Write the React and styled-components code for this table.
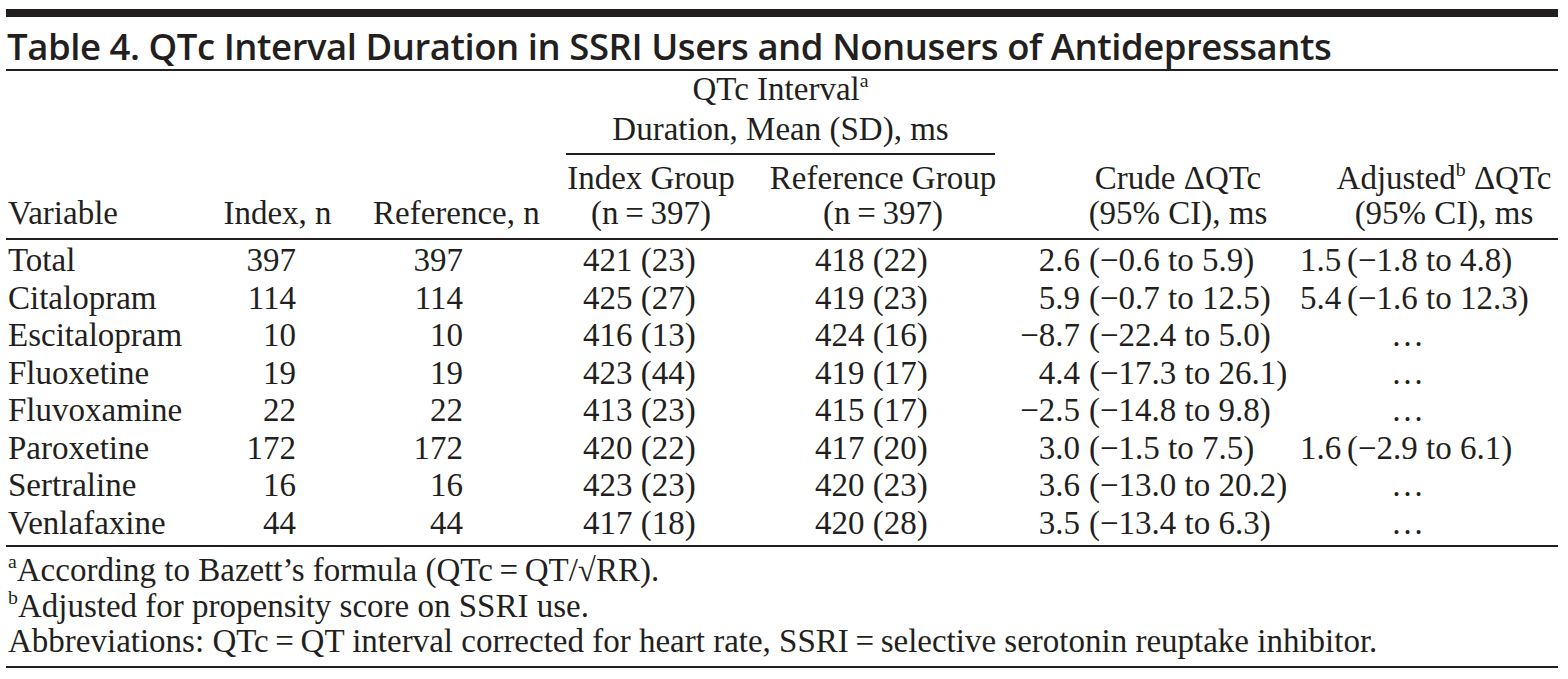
import styled, { createGlobalStyle } from "styled-components";

const GlobalStyle = createGlobalStyle`
  html, body {
    margin: 0;
    padding: 0;
    background: #ffffff;
  }
`;

const INK = "#231f20";
const COLS = "194px 155px 171px 240px 234px 300px 258px";

const Page = styled.div`
  width: 1552px;
  margin-left: 6px;
  padding-top: 9px;
  color: ${INK};
  font-family: "Liberation Serif", "Times New Roman", serif;
`;

const TopRule = styled.div`
  height: 8px;
  background: ${INK};
`;

const Title = styled.h1`
  margin: 0;
  padding: 7px 0 0 1px;
  height: 45px;
  font-family: "Open Sans", "Noto Sans", sans-serif;
  font-weight: 600;
  font-size: 36.5px;
  line-height: 44px;
  letter-spacing: -0.45px;
  white-space: nowrap;
  border-bottom: 2px solid ${INK};
`;

const Head = styled.div`
  display: grid;
  grid-template-columns: ${COLS};
  grid-template-rows: 84px 83px;
  border-bottom: 2px solid ${INK};
  font-size: 33px;
  line-height: 35px;
`;

const HeadCell = styled.div`
  grid-column: ${(p) => p.$col};
  grid-row: ${(p) => p.$row || "1 / 3"};
  align-self: end;
  padding-bottom: 7px;
  padding-left: ${(p) => p.$shift || 0}px;
  text-align: ${(p) => p.$align || "center"};
  white-space: nowrap;
`;

const SpanHead = styled.div`
  grid-column: 4 / 6;
  grid-row: 1;
  align-self: end;
  margin: 0 5px 0 40px;
  padding-bottom: 6px;
  text-align: center;
  white-space: nowrap;
  border-bottom: 2px solid ${INK};
`;

const SpanLine = styled.div`
  margin-bottom: ${(p) => p.$gap || 0}px;
`;

const Sup = styled.sup`
  font-size: 0.6em;
  line-height: 0;
  vertical-align: 0.65em;
`;

const Body = styled.div`
  display: grid;
  grid-template-columns: ${COLS};
  grid-auto-rows: 37.5px;
  padding-top: 2px;
  padding-bottom: 3px;
  border-bottom: 2px solid ${INK};
  font-size: 33px;
  line-height: 37.5px;
`;

const Cell = styled.div`
  white-space: nowrap;
  text-align: ${(p) => p.$align || "left"};
  padding-left: ${(p) => p.$pl || 0}px;
  padding-right: ${(p) => p.$pr || 0}px;
`;

const Interval = styled.div`
  display: flex;
  gap: ${(p) => p.$gap}px;
  white-space: nowrap;
`;

const Estimate = styled.span`
  width: ${(p) => p.$w}px;
  text-align: right;
  flex: none;
`;

const Notes = styled.div`
  padding: 6px 0 6px 2px;
  border-bottom: 2px solid ${INK};
  font-size: 33px;
  line-height: 35.5px;
  white-space: nowrap;
`;

const Note = styled.div``;

const rows = [
  ["Total", "397", "397", "421 (23)", "418 (22)", ["2.6", "(−0.6 to 5.9)"], ["1.5", "(−1.8 to 4.8)"]],
  ["Citalopram", "114", "114", "425 (27)", "419 (23)", ["5.9", "(−0.7 to 12.5)"], ["5.4", "(−1.6 to 12.3)"]],
  ["Escitalopram", "10", "10", "416 (13)", "424 (16)", ["−8.7", "(−22.4 to 5.0)"], null],
  ["Fluoxetine", "19", "19", "423 (44)", "419 (17)", ["4.4", "(−17.3 to 26.1)"], null],
  ["Fluvoxamine", "22", "22", "413 (23)", "415 (17)", ["−2.5", "(−14.8 to 9.8)"], null],
  ["Paroxetine", "172", "172", "420 (22)", "417 (20)", ["3.0", "(−1.5 to 7.5)"], ["1.6", "(−2.9 to 6.1)"]],
  ["Sertraline", "16", "16", "423 (23)", "420 (23)", ["3.6", "(−13.0 to 20.2)"], null],
  ["Venlafaxine", "44", "44", "417 (18)", "420 (28)", ["3.5", "(−13.4 to 6.3)"], null],
];

const T = "\u2009";

export default function App() {
  return (
    <Page>
      <GlobalStyle />
      <TopRule />
      <Title>Table 4. QTc Interval Duration in SSRI Users and Nonusers of Antidepressants</Title>

      <Head>
        <HeadCell $col={1} $align="left" $shift={2}>Variable</HeadCell>
        <HeadCell $col={2}>Index, n</HeadCell>
        <HeadCell $col={3} $shift={18}>Reference, n</HeadCell>
        <SpanHead>
          <SpanLine $gap={5}>
            QTc Interval<Sup>a</Sup>
          </SpanLine>
          <SpanLine>Duration, Mean (SD), ms</SpanLine>
        </SpanHead>
        <HeadCell $col={4} $row={2} $shift={10}>
          Index Group
          <br />
          (n{T}={T}397)
        </HeadCell>
        <HeadCell $col={5} $row={2}>
          Reference Group
          <br />
          (n{T}={T}397)
        </HeadCell>
        <HeadCell $col={6} $shift={56}>
          Crude ΔQTc
          <br />
          (95% CI), ms
        </HeadCell>
        <HeadCell $col={7} $shift={30}>
          Adjusted<Sup>b</Sup> ΔQTc
          <br />
          (95% CI), ms
        </HeadCell>
      </Head>

      <Body>
        {rows.map((r) => [
          <Cell key={r[0] + "v"} $pl={2}>{r[0]}</Cell>,
          <Cell key={r[0] + "i"} $align="right" $pr={59}>{r[1]}</Cell>,
          <Cell key={r[0] + "r"} $align="right" $pr={63}>{r[2]}</Cell>,
          <Cell key={r[0] + "ig"} $pl={57}>{r[3]}</Cell>,
          <Cell key={r[0] + "rg"} $pl={49}>{r[4]}</Cell>,
          <Interval key={r[0] + "c"} $gap={9}>
            <Estimate $w={80}>{r[5][0]}</Estimate>
            <span>{r[5][1]}</span>
          </Interval>,
          r[6] ? (
            <Interval key={r[0] + "a"} $gap={7}>
              <Estimate $w={40}>{r[6][0]}</Estimate>
              <span>{r[6][1]}</span>
            </Interval>
          ) : (
            <Cell key={r[0] + "a"} $pl={91}>…</Cell>
          ),
        ])}
      </Body>

      <Notes>
        <Note>
          <Sup>a</Sup>According to Bazett’s formula (QTc{T}={T}QT/√RR).
        </Note>
        <Note>
          <Sup>b</Sup>Adjusted for propensity score on SSRI use.
        </Note>
        <Note>
          Abbreviations: QTc{T}={T}QT interval corrected for heart rate, SSRI{T}={T}selective serotonin reuptake inhibitor.
        </Note>
      </Notes>
    </Page>
  );
}
